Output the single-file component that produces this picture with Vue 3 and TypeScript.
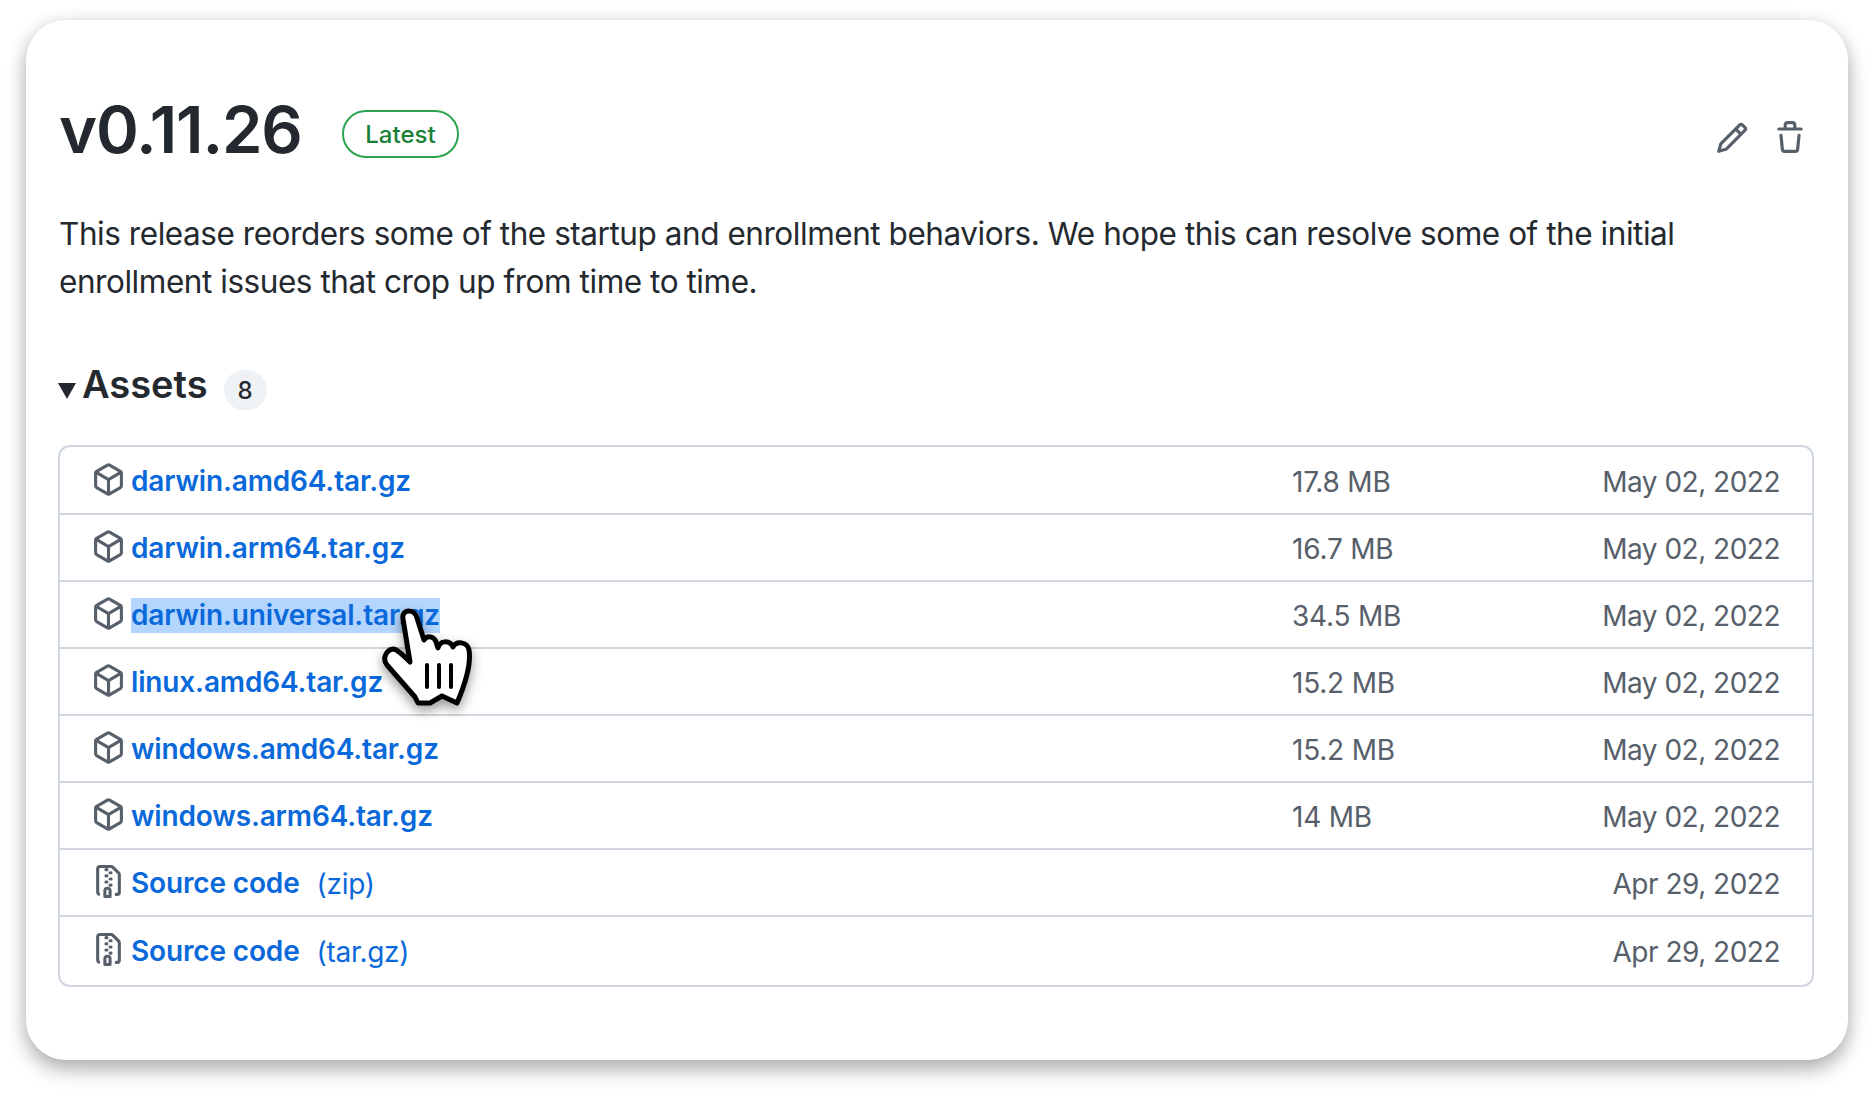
<script setup lang="ts">
interface Asset {
  name: string
  size?: string
  date: string
  kind: 'package' | 'zip'
  suffix?: string
  selected?: boolean
}

const assets: Asset[] = [
  { name: 'darwin.amd64.tar.gz', size: '17.8 MB', date: 'May 02, 2022', kind: 'package' },
  { name: 'darwin.arm64.tar.gz', size: '16.7 MB', date: 'May 02, 2022', kind: 'package' },
  { name: 'darwin.universal.tar.gz', size: '34.5 MB', date: 'May 02, 2022', kind: 'package', selected: true },
  { name: 'linux.amd64.tar.gz', size: '15.2 MB', date: 'May 02, 2022', kind: 'package' },
  { name: 'windows.amd64.tar.gz', size: '15.2 MB', date: 'May 02, 2022', kind: 'package' },
  { name: 'windows.arm64.tar.gz', size: '14 MB', date: 'May 02, 2022', kind: 'package' },
  { name: 'Source code', suffix: '(zip)', date: 'Apr 29, 2022', kind: 'zip' },
  { name: 'Source code', suffix: '(tar.gz)', date: 'Apr 29, 2022', kind: 'zip' }
]
</script>

<template>
  <div class="page">
    <section class="card">
      <header class="head">
        <h1 class="title">v0.11.26</h1>
        <span class="latest">Latest</span>
        <div class="actions">
          <svg class="octicon" viewBox="0 0 16 16" aria-hidden="true">
            <path d="M11.013 1.427a1.75 1.75 0 0 1 2.474 0l1.086 1.086a1.75 1.75 0 0 1 0 2.474l-8.61 8.61c-.21.21-.47.364-.756.445l-3.251.93a.75.75 0 0 1-.927-.928l.929-3.25c.081-.286.235-.547.445-.758l8.61-8.61Zm.176 4.823L9.75 4.81l-6.286 6.287a.253.253 0 0 0-.064.108l-.558 1.953 1.953-.558a.253.253 0 0 0 .108-.064Zm1.238-3.763a.25.25 0 0 0-.354 0L10.811 3.75l1.439 1.44 1.263-1.263a.25.25 0 0 0 0-.354Z" />
          </svg>
          <svg class="octicon" viewBox="0 0 16 16" aria-hidden="true">
            <path d="M11 1.75V3h2.25a.75.75 0 0 1 0 1.5H2.75a.75.75 0 0 1 0-1.5H5V1.75C5 .784 5.784 0 6.75 0h2.5C10.216 0 11 .784 11 1.75ZM4.496 6.675l.66 6.6a.25.25 0 0 0 .249.225h5.19a.25.25 0 0 0 .249-.225l.66-6.6a.75.75 0 0 1 1.492.149l-.66 6.6A1.748 1.748 0 0 1 10.595 15h-5.19a1.75 1.75 0 0 1-1.741-1.575l-.66-6.6a.75.75 0 1 1 1.492-.15ZM6.5 1.75V3h3V1.75a.25.25 0 0 0-.25-.25h-2.5a.25.25 0 0 0-.25.25Z" />
          </svg>
        </div>
      </header>

      <p class="body">
        This release reorders some of the startup and enrollment behaviors. We hope this can resolve some of the initial
        enrollment issues that crop up from time to time.
      </p>

      <div class="assets-head">
        <span class="caret"></span>
        <h2 class="assets-title">Assets</h2>
        <span class="count">8</span>
      </div>

      <ul class="table">
        <li v-for="a in assets" :key="a.name + a.suffix" class="row">
          <div class="name-cell">
            <svg v-if="a.kind === 'package'" class="octicon row-icon" viewBox="0 0 16 16" aria-hidden="true">
              <path d="m8.878.392 5.25 3.045c.54.314.872.89.872 1.514v6.098a1.75 1.75 0 0 1-.872 1.514l-5.25 3.045a1.75 1.75 0 0 1-1.756 0l-5.25-3.045A1.75 1.75 0 0 1 1 11.049V4.951c0-.624.332-1.201.872-1.514L7.122.392a1.75 1.75 0 0 1 1.756 0ZM7.875 1.69l-4.63 2.685L8 7.133l4.755-2.758-4.63-2.685a.248.248 0 0 0-.25 0ZM2.5 5.677v5.372c0 .09.047.171.125.216l4.625 2.683V8.432Zm6.25 8.271 4.625-2.683a.25.25 0 0 0 .125-.216V5.677L8.75 8.432Z" />
            </svg>
            <svg v-else class="octicon row-icon" viewBox="0 0 16 16" aria-hidden="true">
              <path d="M3.5 1.75v11.5c0 .09.048.173.126.217a.75.75 0 0 1-.752 1.298A1.748 1.748 0 0 1 2 13.25V1.75C2 .784 2.784 0 3.75 0h5.586c.464 0 .909.185 1.237.513l2.914 2.914c.329.328.513.773.513 1.237v8.586A1.75 1.75 0 0 1 12.25 15h-.5a.75.75 0 0 1 0-1.5h.5a.25.25 0 0 0 .25-.25V4.664a.25.25 0 0 0-.073-.177L9.513 1.573a.25.25 0 0 0-.177-.073H7.25a.75.75 0 0 1 0 1.5h-.5a.75.75 0 0 1 0-1.5h-3a.25.25 0 0 0-.25.25Zm3.75 8.75h.5c.966 0 1.75.784 1.75 1.75v3a.75.75 0 0 1-.75.75h-2.5a.75.75 0 0 1-.75-.75v-3c0-.966.784-1.75 1.75-1.75ZM6 5.25a.75.75 0 0 1 .75-.75h.5a.75.75 0 0 1 0 1.5h-.5A.75.75 0 0 1 6 5.25Zm.75 2.25h.5a.75.75 0 0 1 0 1.5h-.5a.75.75 0 0 1 0-1.5ZM8 6.75A.75.75 0 0 1 8.75 6h.5a.75.75 0 0 1 0 1.5h-.5A.75.75 0 0 1 8 6.75ZM8.75 3h.5a.75.75 0 0 1 0 1.5h-.5a.75.75 0 0 1 0-1.5ZM8 9.75A.75.75 0 0 1 8.75 9h.5a.75.75 0 0 1 0 1.5h-.5A.75.75 0 0 1 8 9.75Zm-1 2.5v2.25h1v-2.25a.25.25 0 0 0-.25-.25h-.5a.25.25 0 0 0-.25.25Z" />
            </svg>
            <a class="name" :class="{ selected: a.selected }">{{ a.name }}</a>
            <span v-if="a.suffix" class="suffix">{{ a.suffix }}</span>
          </div>
          <div class="size">{{ a.size }}</div>
          <div class="date">{{ a.date }}</div>
        </li>
      </ul>

      <svg class="hand" viewBox="0 0 120 130" aria-hidden="true">
        <path
          class="hand-body"
          d="M33 29C32 24 35 21 39 21C43 21 46 24 47 28L54 50C57 45 64 46 66 52L68 58C70 50 80 50 83 57C86 51 97 51 99 60C101 72 96 92 87 113L72 106L60 113H48L45 107L17 75C12 69 16 60 23 59C27 59 33 65 40 72Z"
        />
        <path class="hand-lines" d="M57 75V97M69 75V97M81 75V97" />
      </svg>
    </section>
  </div>
</template>

<style>
html, body { margin: 0; background: #fff; }
</style>

<style scoped>
.page {
  box-sizing: border-box;
  width: 1872px;
  height: 1098px;
  padding: 20px 24px 0 26px;
  overflow: hidden;
  background: #fff;
  font-family: Inter, "Liberation Sans", sans-serif;
  color: #24292f;
}
.card {
  position: relative;
  box-sizing: border-box;
  height: 1040px;
  padding: 0 34px 0 32px;
  background: #fff;
  border-radius: 40px;
  box-shadow: 0 10px 20px rgba(0, 0, 0, .27), 0 2px 18px rgba(0, 0, 0, .1);
}
.head {
  display: flex;
  align-items: center;
  height: 106px;
  padding: 57px 0 0 1px;
}
.title {
  margin: 0;
  font-size: 65px;
  line-height: 72px;
  font-weight: 600;
  letter-spacing: -1.15px;
}
.latest {
  display: flex;
  align-items: center;
  box-sizing: border-box;
  height: 48px;
  margin: 8px 0 0 40px;
  padding: 0 21.5px;
  border: 2px solid #2da44e;
  border-radius: 24px;
  color: #1a7f37;
  font-size: 24px;
  font-weight: 500;
}
.actions {
  display: flex;
  gap: 24px;
  margin-left: auto;
  margin-top: 15px;
  padding-right: 7px;
}
.octicon {
  display: block;
  width: 34px;
  height: 34px;
  fill: #57606a;
}
.body {
  margin: 27px 0 0 1px;
  font-size: 31.5px;
  line-height: 48px;
  letter-spacing: -0.45px;
}
.assets-head {
  display: flex;
  align-items: center;
  margin-top: 48px;
  height: 60px;
}
.caret {
  width: 0;
  height: 0;
  border-left: 9px solid transparent;
  border-right: 9px solid transparent;
  border-top: 16px solid #24292f;
  margin-top: 14px;
}
.assets-title {
  margin: 0 0 0 6px;
  font-size: 38px;
  font-weight: 600;
}
.count {
  display: flex;
  align-items: center;
  justify-content: center;
  width: 43px;
  height: 40px;
  margin: 12px 0 0 16px;
  border-radius: 20px;
  background: #eff2f5;
  font-size: 24px;
  font-weight: 500;
}
.table {
  list-style: none;
  margin: 31px 0 0;
  padding: 1px 0;
  border: 2px solid #d0d7de;
  border-radius: 12px;
}
.row {
  display: grid;
  grid-template-columns: 1fr 248px 240px;
  align-items: center;
  box-sizing: border-box;
  height: 67px;
  padding: 2px 32px 0;
  border-bottom: 2px solid #d0d7de;
}
.row:last-child {
  border-bottom: 0;
}
.name-cell {
  display: flex;
  align-items: center;
}
.row-icon {
  width: 33px;
  height: 33px;
  margin-right: 6px;
  margin-top: -5px;
}
.name {
  padding: 1px 0;
  color: #0969da;
  font-size: 28px;
  line-height: 33px;
  font-weight: 600;
  letter-spacing: -0.15px;
}
.name.selected {
  background: #b4d5fe;
}
.suffix {
  margin-left: 17px;
  color: #0969da;
  font-size: 28px;
  letter-spacing: -0.3px;
}
.size, .date {
  color: #57606a;
  font-size: 28px;
}
.size {
  letter-spacing: -0.2px;
}
.date {
  text-align: right;
  letter-spacing: -0.5px;
}
.hand {
  position: absolute;
  left: 344px;
  top: 570px;
  width: 120px;
  height: 130px;
  overflow: visible;
  filter: drop-shadow(0 5px 6px rgba(0, 0, 0, .4));
}
.hand-body {
  fill: #fff;
  stroke: #000;
  stroke-width: 5;
  stroke-linejoin: round;
}
.hand-lines {
  fill: none;
  stroke: #000;
  stroke-width: 4;
  stroke-linecap: round;
}
</style>
